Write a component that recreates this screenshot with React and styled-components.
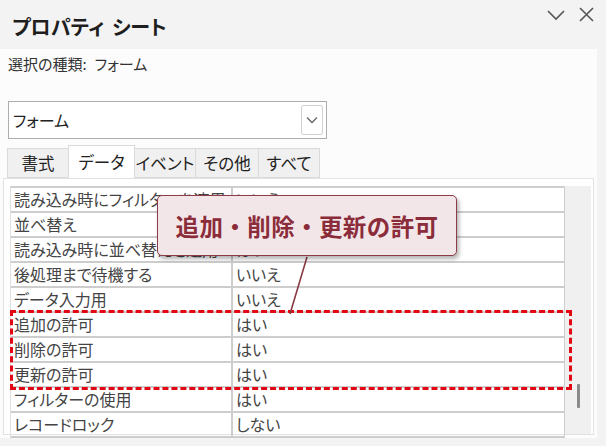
import React from "react";
import styled, { createGlobalStyle } from "styled-components";

const GlobalStyle = createGlobalStyle`
    html, body {
        margin: 0;
        padding: 0;
        background: #f3f3f3;
    }
    body {
        font-family: "Noto Sans CJK JP", "Noto Sans", sans-serif;
        font-feature-settings: "palt";
        color: #333;
    }
`;

const rows = [
    { name: "読み込み時にフィルターを適用", value: "いいえ" },
    { name: "並べ替え", value: "" },
    { name: "読み込み時に並べ替えを適用", value: "はい" },
    { name: "後処理まで待機する", value: "いいえ" },
    { name: "データ入力用", value: "いいえ" },
    { name: "追加の許可", value: "はい", highlight: true },
    { name: "削除の許可", value: "はい", highlight: true },
    { name: "更新の許可", value: "はい", highlight: true },
    { name: "フィルターの使用", value: "はい" },
    { name: "レコードロック", value: "しない" },
];

const tabs = ["書式", "データ", "イベント", "その他", "すべて"];
const tabWidths = [62, 67, 62, 64, 62];

function PropertyRow({ name, value }) {
    return (
        <Row>
            <NameCell>{name}</NameCell>
            <ValueCell>{value}</ValueCell>
        </Row>
    );
}

export default function App() {
    const before = rows.filter((r, i) => i < 5);
    const marked = rows.filter((r) => r.highlight);
    const after = rows.filter((r, i) => i > 7);

    return (
        <Window>
            <GlobalStyle />
            <TitleBar>
                <Title>
                    プロパティ<Gap />シート
                </Title>
                <Controls>
                    <svg width="18" height="12" viewBox="0 0 18 12">
                        <path d="M1 2 L9 10 L17 2" fill="none" stroke="#555" strokeWidth="1.6" />
                    </svg>
                    <svg width="15" height="15" viewBox="0 0 15 15">
                        <path d="M1 1 L14 14 M14 1 L1 14" fill="none" stroke="#555" strokeWidth="1.6" />
                    </svg>
                </Controls>
            </TitleBar>

            <Body>
                <SelectionLabel>
                    選択の種類:<Gap />フォーム
                </SelectionLabel>

                <Combo>
                    <ComboText>フォーム</ComboText>
                    <ComboButton>
                        <svg width="12" height="8" viewBox="0 0 12 8">
                            <path d="M1 1.5 L6 6.5 L11 1.5" fill="none" stroke="#666" strokeWidth="1.3" />
                        </svg>
                    </ComboButton>
                </Combo>

                <TabStrip>
                    {tabs.map((t, i) => (
                        <Tab key={t} $active={i === 1} $width={tabWidths[i]}>
                            {t}
                        </Tab>
                    ))}
                </TabStrip>

                <Panel>
                    <Grid>
                        {before.map((r) => (
                            <PropertyRow key={r.name} {...r} />
                        ))}
                        <Highlight>
                            {marked.map((r) => (
                                <PropertyRow key={r.name} {...r} />
                            ))}
                        </Highlight>
                        {after.map((r) => (
                            <PropertyRow key={r.name} {...r} />
                        ))}
                    </Grid>
                    <ScrollTrack>
                        <ScrollThumb />
                    </ScrollTrack>
                </Panel>
            </Body>

            <Pointer width="40" height="70" viewBox="0 0 40 70">
                <path d="M24 1 L7 58" stroke="#8b3a45" strokeWidth="1.6" fill="none" />
            </Pointer>
            <Callout>追加・削除・更新の許可</Callout>
        </Window>
    );
}

/* ====== STYLES ====== */

const Window = styled.div`
    position: relative;
    width: 606px;
    height: 446px;
    overflow: hidden;
    background: #f3f3f3;
`;

const TitleBar = styled.div`
    height: 49px;
    display: flex;
    align-items: center;
    justify-content: space-between;
    padding-left: 12px;
    padding-right: 12px;
    box-sizing: border-box;
`;

const Title = styled.h1`
    margin: 0;
    margin-top: 4px;
    font-size: 20px;
    font-weight: 700;
    color: #1e1e1e;
    display: flex;
    align-items: center;
`;

const Gap = styled.span`
    display: inline-block;
    width: 8px;
`;

const Controls = styled.div`
    display: flex;
    align-items: center;
    gap: 14px;
    align-self: flex-start;
    margin-top: 7px;
`;

const Body = styled.div`
    width: 597px;
    height: 389px;
    background: #fcfcfc;
    display: flex;
    flex-direction: column;
`;

const SelectionLabel = styled.div`
    padding: 2px 8px 0;
    height: 25px;
    line-height: 25px;
    font-size: 15px;
    color: #333;
    display: flex;
    align-items: center;
`;

const Combo = styled.div`
    margin: 25px 0 0 8px;
    width: 319px;
    height: 38px;
    box-sizing: border-box;
    border: 1px solid #adadad;
    background: #fff;
    display: flex;
    align-items: center;
    justify-content: space-between;
    padding: 0 3px 0 4px;
`;

const ComboText = styled.span`
    font-size: 16px;
    color: #222;
`;

const ComboButton = styled.div`
    width: 22px;
    height: 30px;
    box-sizing: border-box;
    border: 1px solid #d0d0d0;
    border-radius: 2px;
    display: flex;
    align-items: center;
    justify-content: center;
`;

const TabStrip = styled.div`
    margin: 6px 0 0 8px;
    height: 33px;
    display: flex;
    align-items: flex-end;
`;

const Tab = styled.div`
    width: ${(p) => p.$width}px;
    height: ${(p) => (p.$active ? 33 : 30)}px;
    box-sizing: border-box;
    border: 1px solid #dadada;
    border-bottom: ${(p) => (p.$active ? "none" : "1px solid #dadada")};
    margin-left: -1px;
    background: ${(p) => (p.$active ? "#fff" : "#f0f0f0")};
    display: flex;
    align-items: center;
    justify-content: center;
    font-size: 16.5px;
    white-space: nowrap;
    color: #222;
    padding-bottom: 1px;
`;

const Panel = styled.div`
    margin-left: 3px;
    width: 591px;
    height: 257px;
    box-sizing: border-box;
    border: 1px solid #e2e2e2;
    background: #fff;
    display: flex;
    align-items: flex-start;
    padding: 7px 2px 0 6px;
`;

const Grid = styled.div`
    width: 556px;
    border-top: 2px solid #cfcfcf;
    border-left: 1px solid #e0e0e0;
    border-right: 1px solid #cfcfcf;
    box-sizing: border-box;
`;

const Row = styled.div`
    display: flex;
    height: 25px;
    box-sizing: border-box;
    border-bottom: 2px solid #cdcdcd;
    font-size: 16px;
    color: #444;
    line-height: 23px;
`;

const NameCell = styled.div`
    width: 222px;
    padding-left: 3px;
    box-sizing: border-box;
    border-right: 2px solid #cdcdcd;
    white-space: nowrap;
    overflow: hidden;
`;

const ValueCell = styled.div`
    flex: 1;
    padding-left: 3px;
    white-space: nowrap;
`;

const Highlight = styled.div`
    position: relative;

    &::after {
        content: "";
        position: absolute;
        left: -1px;
        right: -8px;
        top: -3px;
        bottom: -2px;
        border: 3px dashed #e30613;
        pointer-events: none;
    }
`;

const ScrollTrack = styled.div`
    width: 26px;
    height: 248px;
    background: #f0f0f0;
    display: flex;
    flex-direction: column;
    align-items: center;
    padding-top: 198px;
    box-sizing: border-box;
`;

const ScrollThumb = styled.div`
    width: 3px;
    height: 24px;
    background: #8a8a8a;
    border-radius: 1px;
`;

const Callout = styled.div`
    position: absolute;
    left: 157px;
    top: 195px;
    width: 300px;
    height: 61px;
    box-sizing: border-box;
    background: #f3e6e8;
    border: 1.5px solid #8e3b48;
    border-radius: 5px;
    box-shadow: 2px 3px 4px rgba(0, 0, 0, 0.3);
    display: flex;
    align-items: center;
    justify-content: center;
    font-size: 23.5px;
    font-weight: 700;
    font-feature-settings: normal;
    color: #8b2c3b;
    letter-spacing: 0.4px;
`;

const Pointer = styled.svg`
    position: absolute;
    left: 283px;
    top: 256px;
`;
